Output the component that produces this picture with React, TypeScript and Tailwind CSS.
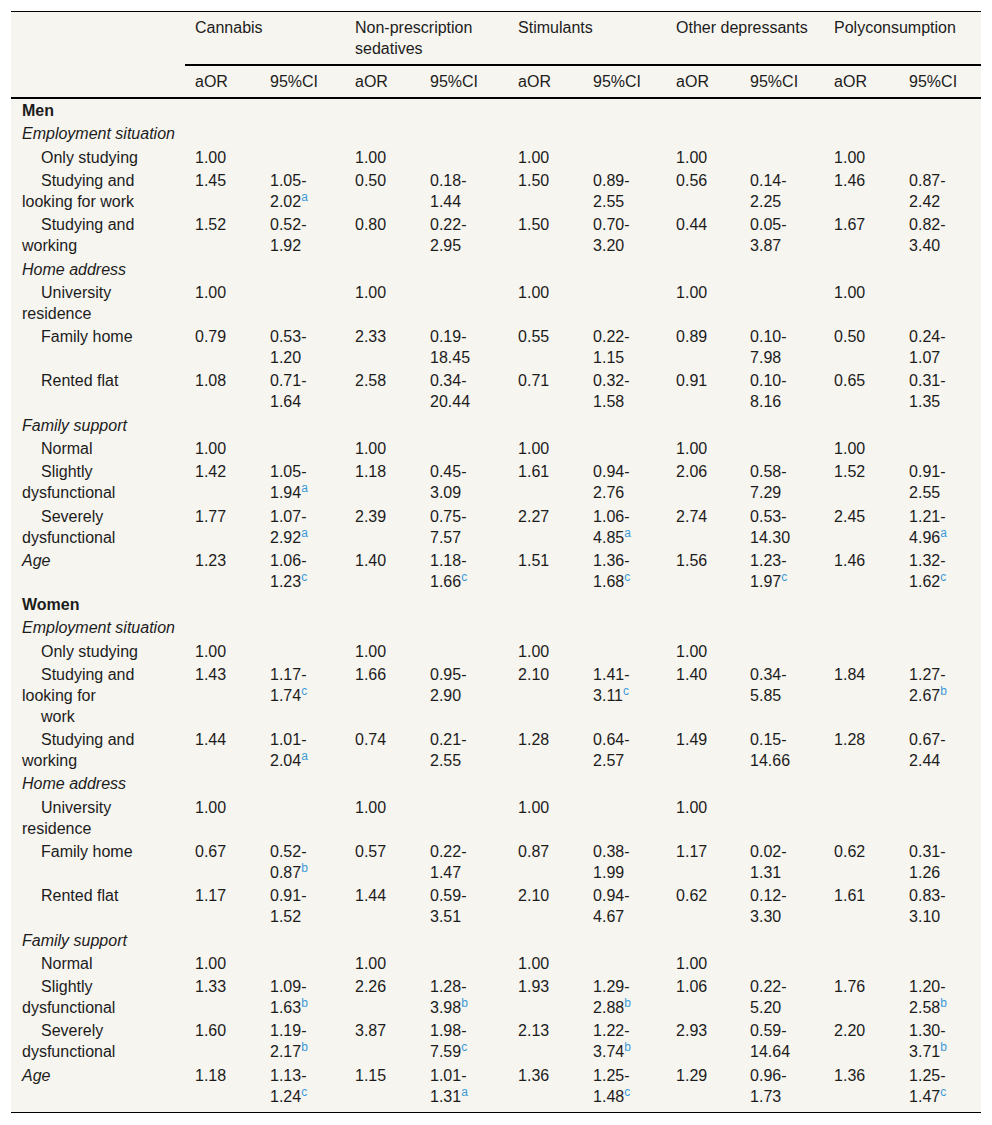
type Cell = string

type Row =
  | { kind: 'group'; label: string }
  | { kind: 'section'; label: string }
  | { kind: 'data'; label: string[]; italic?: boolean; values: Cell[] }

const groups = ['Cannabis', 'Non-prescription sedatives', 'Stimulants', 'Other depressants', 'Polyconsumption']

const ones = ['1.00', '', '1.00', '', '1.00', '', '1.00', '', '1.00', '']
const onesNoPoly = ['1.00', '', '1.00', '', '1.00', '', '1.00', '', '', '']

const rows: Row[] = [
  { kind: 'group', label: 'Men' },
  { kind: 'section', label: 'Employment situation' },
  { kind: 'data', label: ['Only studying'], values: ones },
  {
    kind: 'data',
    label: ['Studying and looking for work'],
    values: ['1.45', '1.05-2.02|a', '0.50', '0.18-1.44', '1.50', '0.89-2.55', '0.56', '0.14-2.25', '1.46', '0.87-2.42'],
  },
  {
    kind: 'data',
    label: ['Studying and working'],
    values: ['1.52', '0.52-1.92', '0.80', '0.22-2.95', '1.50', '0.70-3.20', '0.44', '0.05-3.87', '1.67', '0.82-3.40'],
  },
  { kind: 'section', label: 'Home address' },
  { kind: 'data', label: ['University residence'], values: ones },
  {
    kind: 'data',
    label: ['Family home'],
    values: ['0.79', '0.53-1.20', '2.33', '0.19-18.45', '0.55', '0.22-1.15', '0.89', '0.10-7.98', '0.50', '0.24-1.07'],
  },
  {
    kind: 'data',
    label: ['Rented flat'],
    values: ['1.08', '0.71-1.64', '2.58', '0.34-20.44', '0.71', '0.32-1.58', '0.91', '0.10-8.16', '0.65', '0.31-1.35'],
  },
  { kind: 'section', label: 'Family support' },
  { kind: 'data', label: ['Normal'], values: ones },
  {
    kind: 'data',
    label: ['Slightly dysfunctional'],
    values: ['1.42', '1.05-1.94|a', '1.18', '0.45-3.09', '1.61', '0.94-2.76', '2.06', '0.58-7.29', '1.52', '0.91-2.55'],
  },
  {
    kind: 'data',
    label: ['Severely dysfunctional'],
    values: ['1.77', '1.07-2.92|a', '2.39', '0.75-7.57', '2.27', '1.06-4.85|a', '2.74', '0.53-14.30', '2.45', '1.21-4.96|a'],
  },
  {
    kind: 'data',
    label: ['Age'],
    italic: true,
    values: ['1.23', '1.06-1.23|c', '1.40', '1.18-1.66|c', '1.51', '1.36-1.68|c', '1.56', '1.23-1.97|c', '1.46', '1.32-1.62|c'],
  },
  { kind: 'group', label: 'Women' },
  { kind: 'section', label: 'Employment situation' },
  { kind: 'data', label: ['Only studying'], values: onesNoPoly },
  {
    kind: 'data',
    label: ['Studying and looking for', 'work'],
    values: ['1.43', '1.17-1.74|c', '1.66', '0.95-2.90', '2.10', '1.41-3.11|c', '1.40', '0.34-5.85', '1.84', '1.27-2.67|b'],
  },
  {
    kind: 'data',
    label: ['Studying and working'],
    values: ['1.44', '1.01-2.04|a', '0.74', '0.21-2.55', '1.28', '0.64-2.57', '1.49', '0.15-14.66', '1.28', '0.67-2.44'],
  },
  { kind: 'section', label: 'Home address' },
  { kind: 'data', label: ['University residence'], values: onesNoPoly },
  {
    kind: 'data',
    label: ['Family home'],
    values: ['0.67', '0.52-0.87|b', '0.57', '0.22-1.47', '0.87', '0.38-1.99', '1.17', '0.02-1.31', '0.62', '0.31-1.26'],
  },
  {
    kind: 'data',
    label: ['Rented flat'],
    values: ['1.17', '0.91-1.52', '1.44', '0.59-3.51', '2.10', '0.94-4.67', '0.62', '0.12-3.30', '1.61', '0.83-3.10'],
  },
  { kind: 'section', label: 'Family support' },
  { kind: 'data', label: ['Normal'], values: onesNoPoly },
  {
    kind: 'data',
    label: ['Slightly dysfunctional'],
    values: ['1.33', '1.09-1.63|b', '2.26', '1.28-3.98|b', '1.93', '1.29-2.88|b', '1.06', '0.22-5.20', '1.76', '1.20-2.58|b'],
  },
  {
    kind: 'data',
    label: ['Severely dysfunctional'],
    values: ['1.60', '1.19-2.17|b', '3.87', '1.98-7.59|c', '2.13', '1.22-3.74|b', '2.93', '0.59-14.64', '2.20', '1.30-3.71|b'],
  },
  {
    kind: 'data',
    label: ['Age'],
    italic: true,
    values: ['1.18', '1.13-1.24|c', '1.15', '1.01-1.31|a', '1.36', '1.25-1.48|c', '1.29', '0.96-1.73', '1.36', '1.25-1.47|c'],
  },
]

const colWidths = [75, 85, 75, 88, 75, 83, 74, 84, 75, 82]

function Value({ text }: { text: string }) {
  if (!text) return null
  const [range, note] = text.split('|')
  const dash = range.indexOf('-')
  if (dash < 0) return <>{range}</>
  return (
    <>
      {range.slice(0, dash + 1)}
      <br />
      {range.slice(dash + 1)}
      {note && <sup className="text-[#3b9ad6]">{note}</sup>}
    </>
  )
}

export default function App() {
  return (
    <div className="min-h-[1125px] bg-white p-[11px] font-['Liberation_Sans',Arial,sans-serif] text-[16px] leading-[21px] text-[#1c1c1c]">
      <table className="w-[970px] table-fixed border-collapse border-t border-b border-black bg-[#f7f5f0]">
        <colgroup>
          <col className="w-[174px]" />
          {colWidths.map((w, i) => (
            <col key={i} style={{ width: w }} />
          ))}
        </colgroup>
        <thead>
          <tr>
            <th rowSpan={2} className="border-b-2 border-black" />
            {groups.map((g) => (
              <th
                key={g}
                colSpan={2}
                className="border-b-2 border-black pt-[5px] pb-[5px] pl-[10px] pr-[14px] text-left align-top font-normal"
              >
                {g}
              </th>
            ))}
          </tr>
          <tr>
            {groups.flatMap((g) => [
              <th key={g + 'a'} className="border-b-2 border-black py-[5px] pl-[10px] text-left align-top font-normal">
                aOR
              </th>,
              <th key={g + 'c'} className="border-b-2 border-black py-[5px] pl-[10px] text-left align-top font-normal">
                95%CI
              </th>,
            ])}
          </tr>
        </thead>
        <tbody>
          {rows.map((r, i) => {
            const last = i === rows.length - 1
            const pad = last ? 'pt-[1.15px] pb-[5px]' : 'py-[1.15px]'
            if (r.kind === 'group') {
              return (
                <tr key={i}>
                  <td className={`${pad} pl-[11px] font-bold`}>{r.label}</td>
                  <td colSpan={10} className={pad} />
                </tr>
              )
            }
            if (r.kind === 'section') {
              return (
                <tr key={i}>
                  <td className={`${pad} pl-[11px] italic`}>{r.label}</td>
                  <td colSpan={10} className={pad} />
                </tr>
              )
            }
            return (
              <tr key={i}>
                <td className={`${pad} pl-[11px] pr-[10px] align-top`}>
                  {r.italic ? (
                    <span className="italic">{r.label[0]}</span>
                  ) : (
                    r.label.map((l, j) => (
                      <div key={j} className="indent-[19px]">
                        {l}
                      </div>
                    ))
                  )}
                </td>
                {r.values.map((v, j) => (
                  <td key={j} className={`${pad} pl-[10px] align-top`}>
                    <Value text={v} />
                  </td>
                ))}
              </tr>
            )
          })}
        </tbody>
      </table>
    </div>
  )
}
